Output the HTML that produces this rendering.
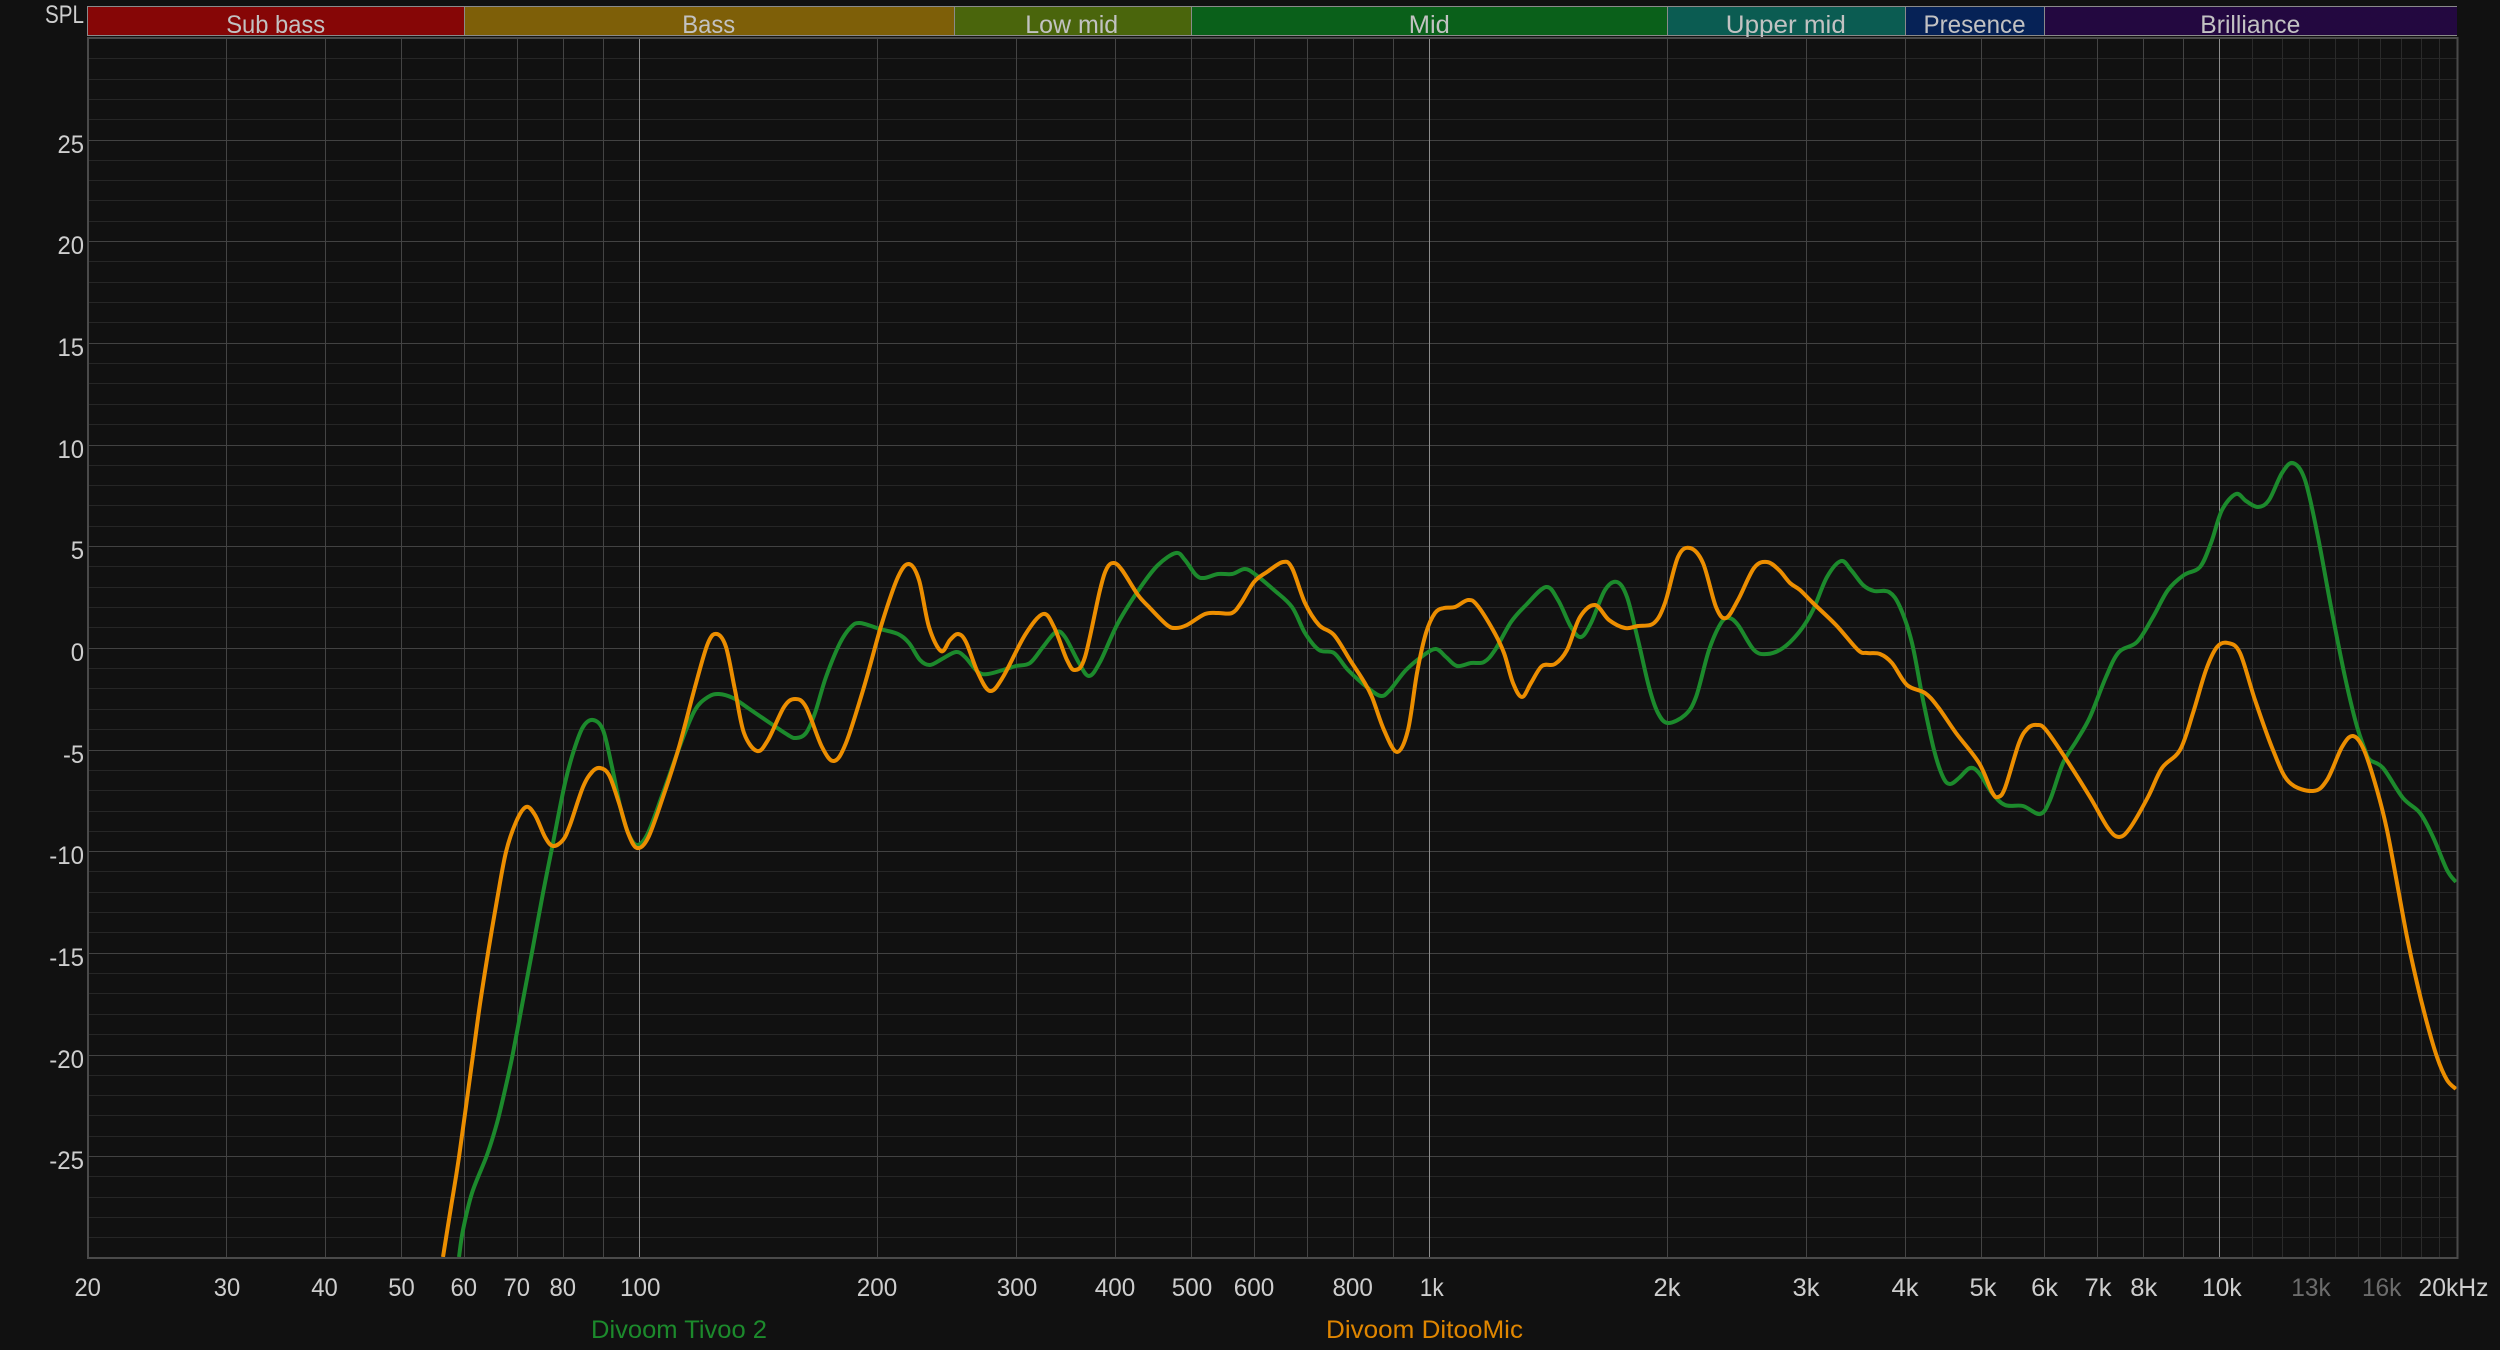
<!DOCTYPE html>
<html lang="en">
<head>
<meta charset="utf-8">
<title>SPL frequency response</title>
<style>
html,body{margin:0;padding:0;background:#111111;width:2500px;height:1350px;overflow:hidden}
svg{display:block;position:absolute;left:0;top:0}
text{font-family:"Liberation Sans",sans-serif;font-size:25px}
.b{fill:#c2c2c2;text-anchor:middle}
.y{fill:#cecece;text-anchor:end}
.x{fill:#cecece;text-anchor:middle}
.c{fill:none;stroke-width:4;stroke-linejoin:round;stroke-linecap:butt}
</style>
</head>
<body>
<svg width="2500" height="1350" viewBox="0 0 2500 1350" xmlns="http://www.w3.org/2000/svg">
<rect width="2500" height="1350" fill="#111111"/>

<!-- frequency bands -->
<rect x="87" y="6" width="377" height="30" fill="#860606"/>
<rect x="464" y="6" width="490" height="30" fill="#7e5f08"/>
<rect x="954" y="6" width="237" height="30" fill="#4a650c"/>
<rect x="1191" y="6" width="476" height="30" fill="#0a601a"/>
<rect x="1667" y="6" width="238" height="30" fill="#0b5c52"/>
<rect x="1905" y="6" width="139" height="30" fill="#062256"/>
<rect x="2044" y="6" width="413" height="30" fill="#230840"/>
<path d="M87 6.5H2457M87 35.5H2457M87.5 6V36M464.5 6V36M954.5 6V36M1191.5 6V36M1667.5 6V36M1905.5 6V36M2044.5 6V36" stroke="#8a8a8a" stroke-width="1" fill="none"/>
<text class="b" x="275.7" y="33" textLength="99" lengthAdjust="spacingAndGlyphs">Sub bass</text>
<text class="b" x="708.7" y="33" textLength="53" lengthAdjust="spacingAndGlyphs">Bass</text>
<text class="b" x="1071.7" y="33" textLength="93" lengthAdjust="spacingAndGlyphs">Low mid</text>
<text class="b" x="1429.3" y="33" textLength="41" lengthAdjust="spacingAndGlyphs">Mid</text>
<text class="b" x="1785.8" y="33" textLength="120" lengthAdjust="spacingAndGlyphs">Upper mid</text>
<text class="b" x="1974.5" y="33" textLength="102" lengthAdjust="spacingAndGlyphs">Presence</text>
<text class="b" x="2250.3" y="33" textLength="100" lengthAdjust="spacingAndGlyphs">Brilliance</text>

<!-- minor horizontal grid -->
<path fill="none" stroke="#262626" stroke-width="1" d="M88 58.5H2457M88 79.5H2457M88 99.5H2457M88 119.5H2457M88 160.5H2457M88 180.5H2457M88 200.5H2457M88 221.5H2457M88 261.5H2457M88 282.5H2457M88 302.5H2457M88 322.5H2457M88 363.5H2457M88 383.5H2457M88 404.5H2457M88 424.5H2457M88 465.5H2457M88 485.5H2457M88 505.5H2457M88 526.5H2457M88 566.5H2457M88 587.5H2457M88 607.5H2457M88 627.5H2457M88 668.5H2457M88 688.5H2457M88 709.5H2457M88 729.5H2457M88 770.5H2457M88 790.5H2457M88 811.5H2457M88 831.5H2457M88 871.5H2457M88 892.5H2457M88 912.5H2457M88 932.5H2457M88 973.5H2457M88 993.5H2457M88 1014.5H2457M88 1034.5H2457M88 1075.5H2457M88 1095.5H2457M88 1115.5H2457M88 1136.5H2457M88 1176.5H2457M88 1197.5H2457M88 1217.5H2457M88 1237.5H2457"/>
<!-- dim high-frequency verticals -->
<path fill="none" stroke="#2a2a2a" stroke-width="1" d="M2252.5 38V1257M2282.5 38V1257M2309.5 38V1257M2335.5 38V1257M2358.5 38V1257M2380.5 38V1257M2401.5 38V1257M2421.5 38V1257M2439.5 38V1257"/>
<!-- major horizontal grid -->
<path fill="none" stroke="#424242" stroke-width="1" d="M88 140.5H2457M88 241.5H2457M88 343.5H2457M88 445.5H2457M88 546.5H2457M88 648.5H2457M88 750.5H2457M88 851.5H2457M88 953.5H2457M88 1055.5H2457M88 1156.5H2457"/>
<!-- major vertical grid -->
<path fill="none" stroke="#444444" stroke-width="1" d="M226.5 38V1257M325.5 38V1257M401.5 38V1257M464.5 38V1257M517.5 38V1257M563.5 38V1257M603.5 38V1257M877.5 38V1257M1016.5 38V1257M1115.5 38V1257M1191.5 38V1257M1254.5 38V1257M1307.5 38V1257M1353.5 38V1257M1393.5 38V1257M1667.5 38V1257M1806.5 38V1257M1905.5 38V1257M1981.5 38V1257M2044.5 38V1257M2097.5 38V1257M2143.5 38V1257M2183.5 38V1257"/>
<!-- decade lines -->
<path fill="none" stroke="#8c8c8c" stroke-width="1" d="M639.5 38V1257M1429.5 38V1257M2219.5 38V1257"/>

<!-- curves -->
<path class="c smooth" stroke="#1c8a2c" d="M459,1257 463,1230 472,1193 487,1155 497,1123 505,1090 513,1053 523,1000 533,947 543,893 552,848 565,783 574,750 583,727 593,720 603,730 612,767 621,810 630,837 638,845 648,833 663,793 681,743 695,710 708,697 719,694 733,698 748,708 770,723 788,735 796,738 806,733 815,713 826,677 840,643 851,627 860,623 880,629 898,634 909,643 920,660 930,665 942,659 956,652 965,657 978,672 988,674 1003,670 1016,666 1030,663 1043,647 1056,632 1065,637 1079,663 1089,676 1100,662 1118,623 1140,588 1158,565 1176,553 1185,560 1196,575 1204,578 1218,574 1232,574 1245,569 1256,575 1274,590 1292,607 1305,633 1319,650 1334,653 1348,670 1368,688 1381,696 1390,690 1406,670 1424,655 1436,649 1446,657 1457,666 1471,663 1484,662 1495,650 1511,622 1526,605 1546,587 1558,600 1571,627 1581,637 1591,623 1605,590 1617,582 1627,597 1638,640 1649,687 1658,713 1668,723 1685,715 1696,697 1709,650 1721,623 1729,618 1738,625 1754,650 1767,654 1783,648 1800,631 1813,610 1827,577 1841,561 1851,570 1863,585 1874,591 1889,592 1900,607 1912,643 1923,700 1934,750 1943,777 1950,784 1959,778 1970,768 1979,773 1992,793 2005,805 2023,806 2040,814 2050,800 2063,763 2077,740 2090,717 2106,677 2119,652 2137,642 2153,617 2168,590 2184,575 2200,567 2211,543 2222,510 2236,494 2246,501 2258,507 2269,500 2282,473 2293,463 2305,480 2318,537 2331,607 2345,677 2356,723 2365,750 2370,760 2383,768 2403,798 2420,813 2433,837 2447,870 2456,882"/>
<path class="c smooth" stroke="#ec8e00" d="M443,1257 451,1207 459,1157 473,1055 480,1004 488,953 497,900 506,852 516,822 526,807 535,815 545,837 553,846 563,840 570,825 583,787 592,772 600,768 609,775 619,803 628,833 637,848 648,838 663,797 679,747 695,687 708,643 717,634 726,647 735,690 744,733 757,751 768,740 784,707 795,699 806,707 822,747 834,761 846,743 864,687 882,623 898,577 909,564 919,580 929,627 941,651 950,640 958,634 966,642 978,673 990,691 1003,677 1025,635 1043,614 1054,627 1067,660 1075,670 1085,657 1100,590 1107,568 1114,563 1122,570 1138,595 1149,607 1167,625 1176,628 1187,625 1205,614 1218,613 1232,613 1241,603 1254,582 1267,572 1283,562 1292,568 1305,603 1319,625 1334,635 1350,660 1363,680 1372,697 1384,730 1397,752 1408,730 1417,673 1426,633 1435,613 1444,608 1455,607 1468,600 1477,605 1493,630 1504,653 1513,683 1522,697 1531,683 1542,666 1555,664 1567,650 1580,617 1595,605 1609,620 1625,628 1638,626 1654,623 1665,603 1678,557 1690,548 1703,563 1716,607 1726,618 1738,600 1754,568 1767,562 1779,570 1790,583 1800,590 1813,603 1836,625 1858,650 1867,653 1880,654 1892,663 1907,685 1925,693 1938,707 1956,733 1979,763 1992,792 1998,797 2005,788 2019,743 2028,728 2037,725 2046,730 2068,762 2090,797 2108,828 2119,837 2130,828 2148,797 2162,768 2180,750 2193,713 2206,670 2217,647 2228,643 2240,653 2255,700 2273,750 2289,782 2313,791 2327,780 2342,747 2353,736 2364,750 2377,790 2387,830 2397,883 2407,937 2417,983 2427,1023 2437,1057 2447,1080 2456,1089"/>

<!-- plot border -->
<path fill="none" stroke="#4a4a4a" stroke-width="2" d="M88 38H2457.5V1258H88Z"/>

<!-- y axis -->
<text class="y" x="84" y="23" textLength="39" lengthAdjust="spacingAndGlyphs">SPL</text>
<text class="y" x="84" y="153" textLength="26.5" lengthAdjust="spacingAndGlyphs">25</text>
<text class="y" x="84" y="254" textLength="26.5" lengthAdjust="spacingAndGlyphs">20</text>
<text class="y" x="84" y="356" textLength="26.5" lengthAdjust="spacingAndGlyphs">15</text>
<text class="y" x="84" y="458" textLength="26.5" lengthAdjust="spacingAndGlyphs">10</text>
<text class="y" x="84" y="559" textLength="13.3" lengthAdjust="spacingAndGlyphs">5</text>
<text class="y" x="84" y="661" textLength="13.3" lengthAdjust="spacingAndGlyphs">0</text>
<text class="y" x="84" y="763" textLength="21" lengthAdjust="spacingAndGlyphs">-5</text>
<text class="y" x="84" y="864" textLength="34.7" lengthAdjust="spacingAndGlyphs">-10</text>
<text class="y" x="84" y="966" textLength="34.7" lengthAdjust="spacingAndGlyphs">-15</text>
<text class="y" x="84" y="1068" textLength="34.7" lengthAdjust="spacingAndGlyphs">-20</text>
<text class="y" x="84" y="1169" textLength="34.7" lengthAdjust="spacingAndGlyphs">-25</text>

<!-- x axis -->
<text class="x" x="87.7" y="1296" textLength="26.5" lengthAdjust="spacingAndGlyphs">20</text>
<text class="x" x="227" y="1296" textLength="26.5" lengthAdjust="spacingAndGlyphs">30</text>
<text class="x" x="324.5" y="1296" textLength="26.5" lengthAdjust="spacingAndGlyphs">40</text>
<text class="x" x="401.5" y="1296" textLength="26.5" lengthAdjust="spacingAndGlyphs">50</text>
<text class="x" x="463.8" y="1296" textLength="26.5" lengthAdjust="spacingAndGlyphs">60</text>
<text class="x" x="516.8" y="1296" textLength="26.5" lengthAdjust="spacingAndGlyphs">70</text>
<text class="x" x="562.8" y="1296" textLength="26.5" lengthAdjust="spacingAndGlyphs">80</text>
<text class="x" x="640.3" y="1296" textLength="40.5" lengthAdjust="spacingAndGlyphs">100</text>
<text class="x" x="877" y="1296" textLength="40.5" lengthAdjust="spacingAndGlyphs">200</text>
<text class="x" x="1017" y="1296" textLength="40.5" lengthAdjust="spacingAndGlyphs">300</text>
<text class="x" x="1115" y="1296" textLength="40.5" lengthAdjust="spacingAndGlyphs">400</text>
<text class="x" x="1192" y="1296" textLength="40.5" lengthAdjust="spacingAndGlyphs">500</text>
<text class="x" x="1254" y="1296" textLength="40.5" lengthAdjust="spacingAndGlyphs">600</text>
<text class="x" x="1352.7" y="1296" textLength="40.5" lengthAdjust="spacingAndGlyphs">800</text>
<text class="x" x="1431.7" y="1296" textLength="24" lengthAdjust="spacingAndGlyphs">1k</text>
<text class="x" x="1667" y="1296" textLength="27" lengthAdjust="spacingAndGlyphs">2k</text>
<text class="x" x="1806" y="1296" textLength="27" lengthAdjust="spacingAndGlyphs">3k</text>
<text class="x" x="1905" y="1296" textLength="27" lengthAdjust="spacingAndGlyphs">4k</text>
<text class="x" x="1983" y="1296" textLength="27" lengthAdjust="spacingAndGlyphs">5k</text>
<text class="x" x="2044.6" y="1296" textLength="27" lengthAdjust="spacingAndGlyphs">6k</text>
<text class="x" x="2098" y="1296" textLength="27" lengthAdjust="spacingAndGlyphs">7k</text>
<text class="x" x="2143.8" y="1296" textLength="27" lengthAdjust="spacingAndGlyphs">8k</text>
<text class="x" x="2221.9" y="1296" textLength="39.5" lengthAdjust="spacingAndGlyphs">10k</text>
<text class="x" x="2311" y="1296" textLength="39.5" lengthAdjust="spacingAndGlyphs" style="fill:#6c6c6c">13k</text>
<text class="x" x="2381.7" y="1296" textLength="39.5" lengthAdjust="spacingAndGlyphs" style="fill:#6c6c6c">16k</text>
<text class="x" x="2453.5" y="1296" textLength="70" lengthAdjust="spacingAndGlyphs">20kHz</text>

<!-- legend -->
<text x="591" y="1338" fill="#1c8a2c" textLength="176" lengthAdjust="spacingAndGlyphs">Divoom Tivoo 2</text>
<text x="1326" y="1338" fill="#e08600" textLength="197" lengthAdjust="spacingAndGlyphs">Divoom DitooMic</text>
</svg>
<script>
document.querySelectorAll('path.smooth').forEach(function(el){
  var n=el.getAttribute('d').replace('M','').trim().split(/\s+/).map(function(s){return s.split(',').map(Number)});
  var d='M'+n[0][0]+' '+n[0][1];
  for(var i=0;i<n.length-1;i++){
    var p0=n[Math.max(i-1,0)],p1=n[i],p2=n[i+1],p3=n[Math.min(i+2,n.length-1)];
    var c1x=p1[0]+(p2[0]-p0[0])/6,c1y=p1[1]+(p2[1]-p0[1])/6;
    var c2x=p2[0]-(p3[0]-p1[0])/6,c2y=p2[1]-(p3[1]-p1[1])/6;
    d+='C'+c1x.toFixed(1)+' '+c1y.toFixed(1)+' '+c2x.toFixed(1)+' '+c2y.toFixed(1)+' '+p2[0]+' '+p2[1];
  }
  el.setAttribute('d',d);
});
</script>
</body>
</html>
